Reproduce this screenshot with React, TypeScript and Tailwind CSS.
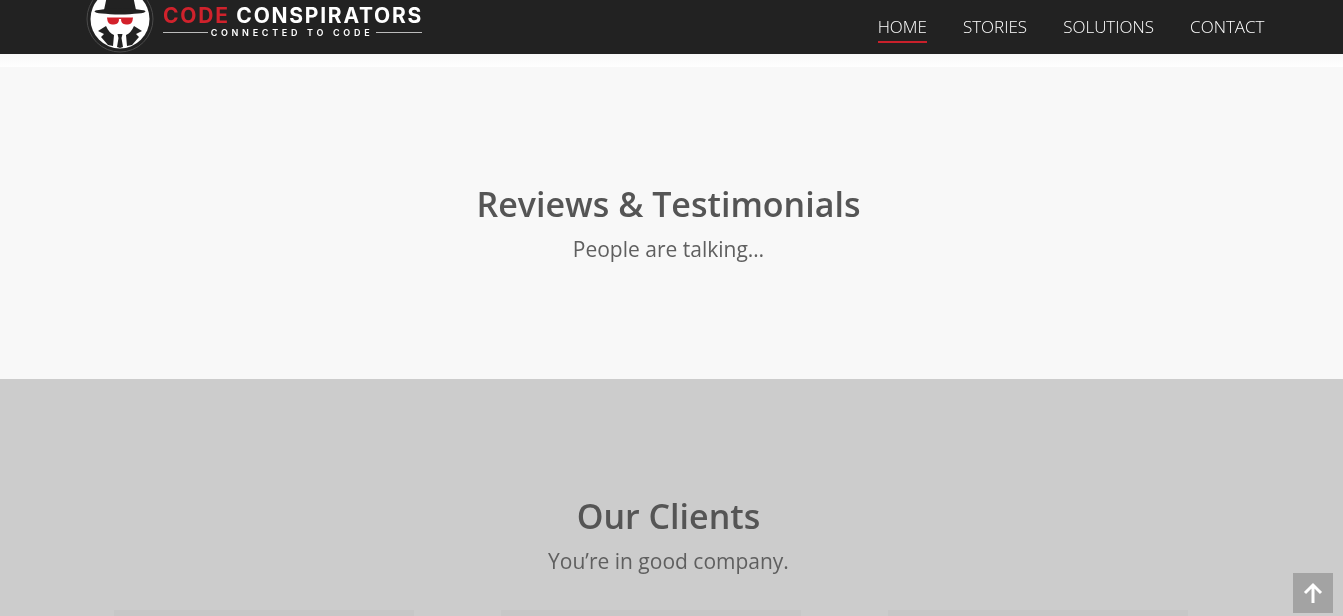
export default function App() {
  const font = { fontFamily: '"Open Sans", sans-serif' };
  return (
    <div className="h-[616px] w-full overflow-hidden bg-[#cccccc] relative" style={font}>
      <header className="h-[54px] bg-[#222222] flex items-start justify-between pl-[86px] pr-[78.500px] overflow-hidden">
        <div className="flex items-start gap-[9px]">
          <svg width="68" height="54" viewBox="0 0 68 54" className="shrink-0">
            <circle cx="34" cy="19" r="33" fill="#222" stroke="#4a4a4a" strokeWidth="1" />
            <circle cx="34" cy="19" r="29.500" fill="#fff" />
            <path d="M18 10 L21 -4 H47 L50 10Z" fill="#222" />
            <ellipse cx="34" cy="11.500" rx="25.500" ry="3" fill="#222" />
            <path d="M21 17.500 H33 Q33.500 24.500 28 24.500 H26 Q21.500 24.500 21 17.500Z" fill="#d3202a" />
            <path d="M35 17.500 H47 Q46.500 24.500 42 24.500 H40 Q34.500 24.500 35 17.500Z" fill="#d3202a" />
            <rect x="33" y="17.500" width="2" height="1.500" fill="#d3202a" />
            <path d="M20 26 L12 31 L18 34 L15 37 L22 45 L27 46 L28 35 Q23 33 20 26Z" fill="#222" />
            <path d="M48 26 L56 31 L50 34 L53 37 L46 45 L41 46 L40 35 Q45 33 48 26Z" fill="#222" />
            <path d="M31.500 34 H36.500 L35.500 38 L37 47 L34 48 L31 47 L32.500 38Z" fill="#222" />
          </svg>
          <div className="w-[259px] pt-[4px] flex flex-col" style={{ fontFamily: 'Inter, sans-serif' }}>
            <div className="text-[21px] leading-[24px] font-bold whitespace-nowrap text-white tracking-[1.750px] [will-change:opacity]">
              <span className="text-[#d0222c]">CODE</span> CONSPIRATORS
            </div>
            <div className="flex items-center justify-between h-[9px] mt-0">
              <span className="h-px w-[45px] bg-[#bbbbbb]" />
              <span className="text-[9px] leading-[9px] font-semibold text-white tracking-[3.700px] whitespace-nowrap [will-change:opacity]">CONNECTED TO CODE</span>
              <span className="h-px w-[46px] bg-[#bbbbbb]" />
            </div>
          </div>
        </div>
        <nav className="flex gap-[36px] text-[17px] font-light text-white [will-change:opacity]">
          {["HOME", "STORIES", "SOLUTIONS", "CONTACT"].map((n, i) => (
            <a key={n} className={`h-[43px] pt-[15px] leading-[24px] border-b-2 ${i === 0 ? "border-[#c9202b]" : "border-transparent"}`}>{n}</a>
          ))}
        </nav>
      </header>
      <div className="h-[13px] bg-gradient-to-b from-[#f8f8f8] to-white" />
      <section className="h-[312px] bg-[#f8f8f8] flex flex-col items-center pt-[114px] pr-[6px] text-[#555555]">
        <h2 className="text-[34px] leading-[46px] font-semibold [will-change:opacity]">Reviews &amp; Testimonials</h2>
        <p className="text-[21px] leading-[44px] text-[#5f5f5f] [will-change:opacity]">People are talking…</p>
      </section>
      <section className="bg-[#cccccc] flex flex-col items-center pt-[114px] pr-[6px] text-[#555555]">
        <h2 className="text-[34px] leading-[46px] font-semibold [will-change:opacity]">Our Clients</h2>
        <p className="text-[21px] leading-[44px] text-[#5f5f5f] [will-change:opacity]">You’re in good company.</p>
        <div className="w-full mt-[27px] pl-[114px] flex gap-[87px]">
          <div className="w-[300px] h-[20px] bg-[#c7c7c7]" />
          <div className="w-[300px] h-[20px] bg-[#c7c7c7]" />
          <div className="w-[300px] h-[20px] bg-[#c7c7c7]" />
        </div>
      </section>
      <button className="absolute left-[1293px] top-[573px] w-[40px] h-[40px] bg-[#a3a3a3] flex items-center justify-center">
        <svg width="20" height="22" viewBox="0 0 20 22" fill="none" stroke="#fff" strokeWidth="3">
          <path d="M10 21 V3 M2 11 L10 3 L18 11" />
        </svg>
      </button>
    </div>
  );
}
